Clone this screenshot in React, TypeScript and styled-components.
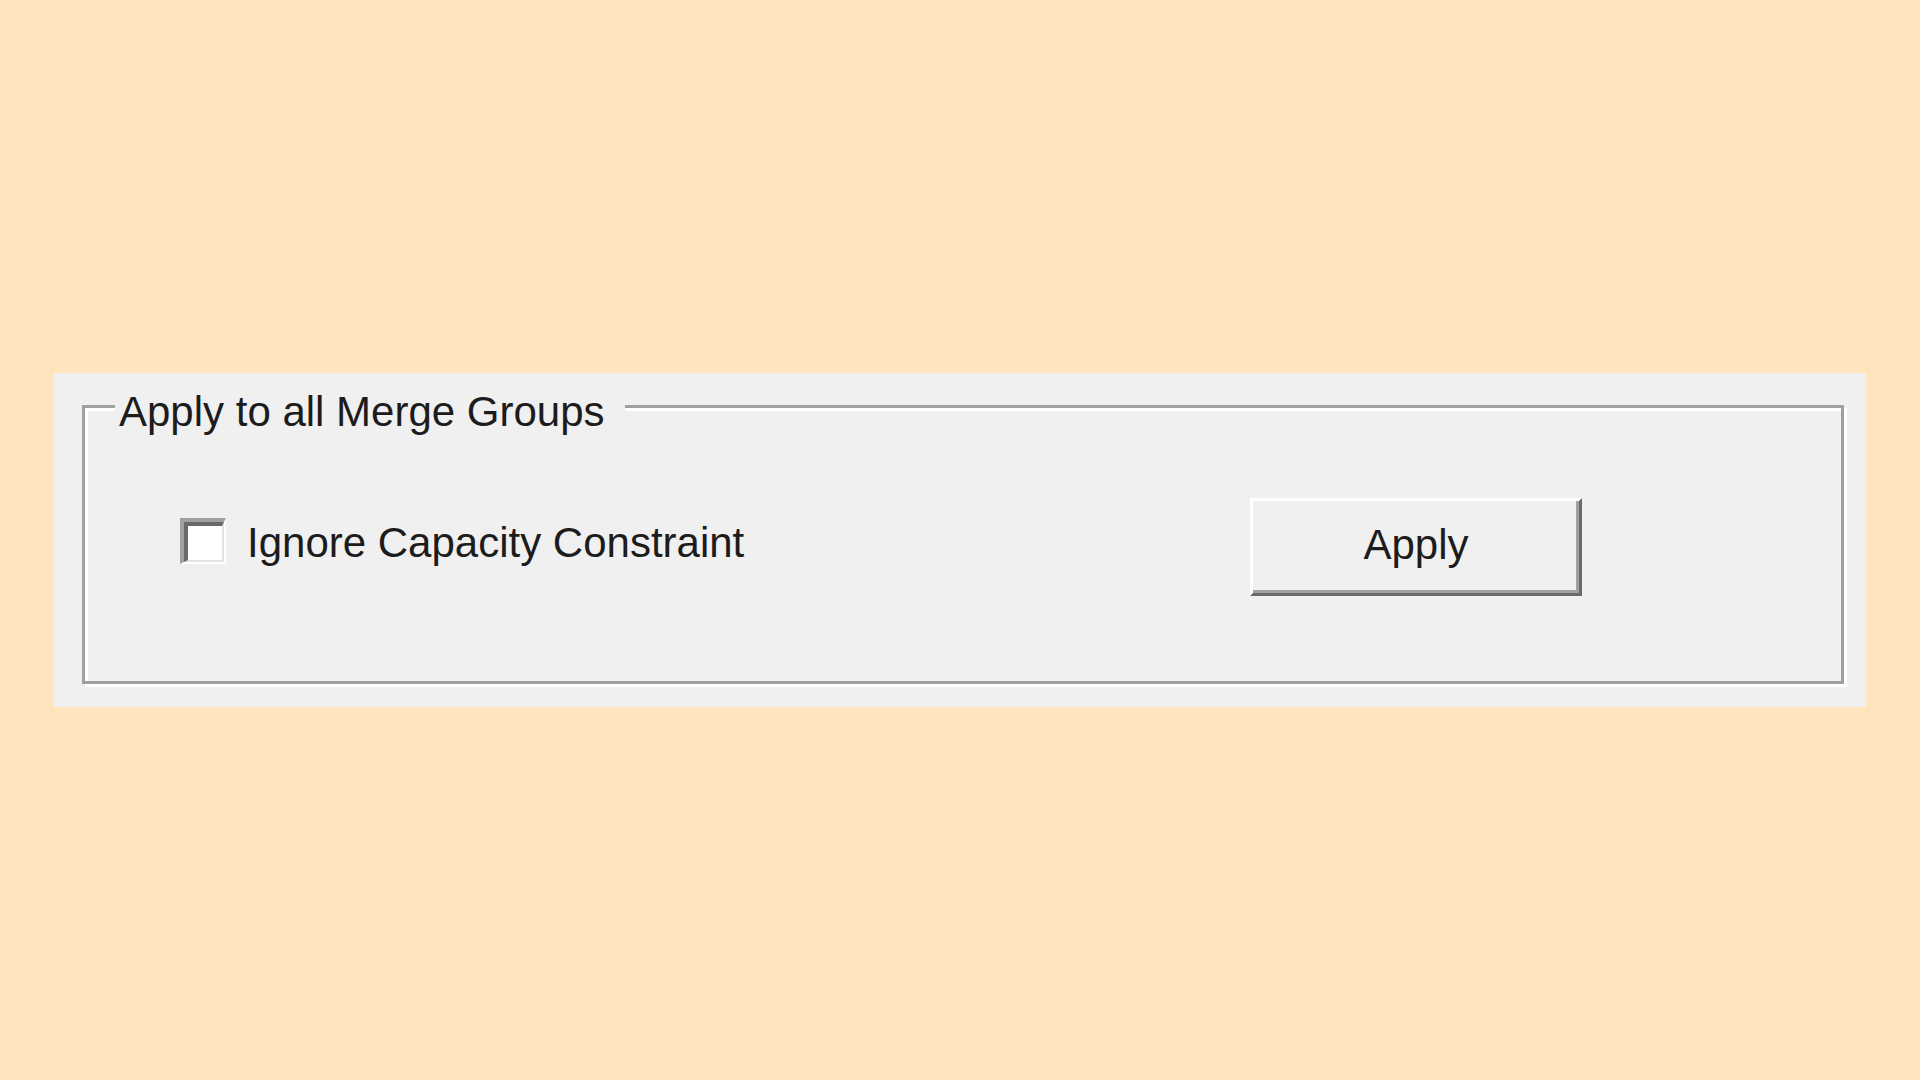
import React, { useState } from 'react';
import styled, { createGlobalStyle } from 'styled-components';

const GlobalStyle = createGlobalStyle`
    html, body {
        margin: 0;
        padding: 0;
        background: #ffe5be;
    }
    body {
        font-family: "Liberation Sans", Arial, sans-serif;
        color: #000000;
    }
`;

const Page = styled.div`
    min-height: 100vh;
    display: flex;
    align-items: center;
    justify-content: center;
`;

const Panel = styled.div`
    width: 1812px;
    box-sizing: border-box;
    padding: 4px 22px 23px 28px;
    background: #f0f0f0;
`;

const GroupBox = styled.fieldset`
    margin: 0;
    padding: 62px 0 85px 0;
    min-inline-size: 0;
    border: 3px solid #a0a0a0;
    box-shadow: inset 3px 3px 0 #ffffff, 3px 3px 0 #ffffff;
`;

const GroupTitle = styled.legend`
    margin-left: 30px;
    padding: 11px 20px 0 4px;
    background: #f0f0f0;
    font-size: 42px;
    line-height: normal;
    color: #1c1c1c;
`;

const Row = styled.div`
    display: flex;
    align-items: center;
    padding-left: 95px;
`;

const CheckRow = styled.label`
    flex: 0 0 1070px;
    display: flex;
    align-items: center;
    gap: 21px;
    margin-bottom: 13px;
    cursor: default;
`;

const HiddenCheckbox = styled.input.attrs({ type: 'checkbox' })`
    position: absolute;
    width: 1px;
    height: 1px;
    margin: -1px;
    overflow: hidden;
    clip: rect(0 0 0 0);
    border: 0;
    padding: 0;
`;

const CheckOuter = styled.span`
    width: 46px;
    height: 46px;
    box-sizing: border-box;
    border-style: solid;
    border-width: 4px 2px 2px 4px;
    border-color: #a0a0a0 #ffffff #ffffff #a0a0a0;
    display: flex;
`;

const CheckInner = styled.span<{ $checked?: boolean }>`
    flex: 1;
    border-style: solid;
    border-width: 4px 2px 2px 4px;
    border-color: #696969 #e3e3e3 #e3e3e3 #696969;
    background: #ffffff;
    display: flex;
    align-items: center;
    justify-content: center;
    svg {
        display: ${p => (p.$checked ? 'block' : 'none')};
    }
`;

const CheckLabel = styled.span`
    font-size: 42px;
    line-height: normal;
    padding-top: 4px;
    color: #1c1c1c;
`;

const Button = styled.button`
    width: 332px;
    height: 98px;
    box-sizing: border-box;
    padding: 0 0 5px 0;
    background: #f0f0f0;
    border-style: solid;
    border-width: 3px;
    border-color: #ffffff #696969 #696969 #ffffff;
    box-shadow: inset -3px -3px 0 #a0a0a0;
    font-family: "Liberation Sans", Arial, sans-serif;
    font-size: 42px;
    color: #1c1c1c;
    cursor: default;
`;

const CheckboxInput = ({ checked, onChange }: { checked: boolean; onChange: (v: boolean) => void }) => (
    <>
        <HiddenCheckbox checked={checked} onChange={e => onChange(e.target.checked)} />
        <CheckOuter>
            <CheckInner $checked={checked}>
                <svg width="24" height="24" viewBox="0 0 24 24">
                    <path d="M3 12 l6 6 l12 -13" fill="none" stroke="#000" strokeWidth="4" />
                </svg>
            </CheckInner>
        </CheckOuter>
    </>
);

export default function App() {
    const [ignoreCapacity, setIgnoreCapacity] = useState(false);

    return (
        <Page>
            <GlobalStyle />
            <Panel>
                <GroupBox>
                    <GroupTitle>Apply to all Merge Groups</GroupTitle>
                    <Row>
                        <CheckRow>
                            <CheckboxInput checked={ignoreCapacity} onChange={setIgnoreCapacity} />
                            <CheckLabel>Ignore Capacity Constraint</CheckLabel>
                        </CheckRow>
                        <Button>Apply</Button>
                    </Row>
                </GroupBox>
            </Panel>
        </Page>
    );
}
